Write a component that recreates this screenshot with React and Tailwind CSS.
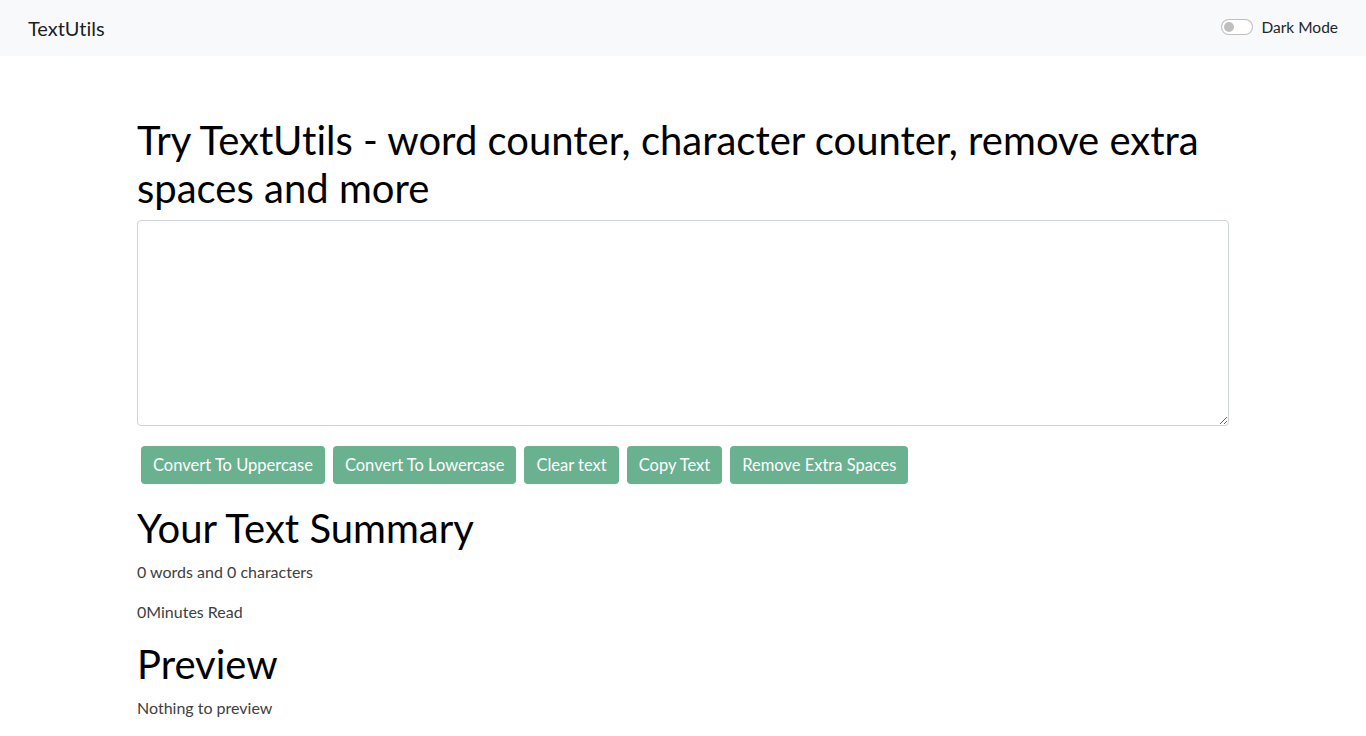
const BUTTONS = [
  'Convert To Uppercase',
  'Convert To Lowercase',
  'Clear text',
  'Copy Text',
  'Remove Extra Spaces',
]

function Navbar() {
  return (
    <nav className="flex h-14 items-center justify-between bg-[#f8f9fa] px-7">
      <a className="text-[20px] leading-[30px] text-black/90">TextUtils</a>
      <div className="flex items-center gap-2">
        {/* switch, off state */}
        <span className="-mt-[2px] flex h-4 w-8 items-center rounded-full border border-black/25 bg-white px-[2px]">
          <span className="h-[10px] w-[10px] rounded-full bg-black/25" />
        </span>
        <span className="text-[15.5px] text-[#212529]">Dark Mode</span>
      </div>
    </nav>
  )
}

export default function App() {
  return (
    <div className="min-h-screen bg-white font-['Lato',_'Open_Sans',_sans-serif] text-[#212529] [font-variant-ligatures:none]">
      <Navbar />
      <main className="ml-[137px] w-[1092px] pt-[60px]">
        <h1 className="mb-2 text-[40px] leading-[48px] text-black">
          Try TextUtils - word counter, character counter, remove extra spaces and more
        </h1>
        <textarea
          rows={8}
          className="block h-[206px] w-full rounded-[4px] border border-[#ced4da] bg-white px-3 py-1.5 text-base outline-none"
        />
        <div className="mt-4 flex flex-wrap">
          {BUTTONS.map((label) => (
            <button
              key={label}
              disabled
              className="mx-1 my-1 h-[38px] rounded-[4px] bg-[#6ab190] px-3 text-[16.5px] leading-6 text-white"
            >
              {label}
            </button>
          ))}
        </div>

        <section className="mt-4">
          <h2 className="mb-2 text-[40px] leading-[48px] text-black">Your Text Summary</h2>
          <p className="mb-4 text-base leading-6 text-[#404040]">0 words and 0 characters</p>
          <p className="mb-4 text-base leading-6 text-[#404040]">0Minutes Read</p>
          <h2 className="mb-2 text-[40px] leading-[48px] text-black">Preview</h2>
          <p className="text-base leading-6 text-[#404040]">Nothing to preview</p>
        </section>
      </main>
    </div>
  )
}
